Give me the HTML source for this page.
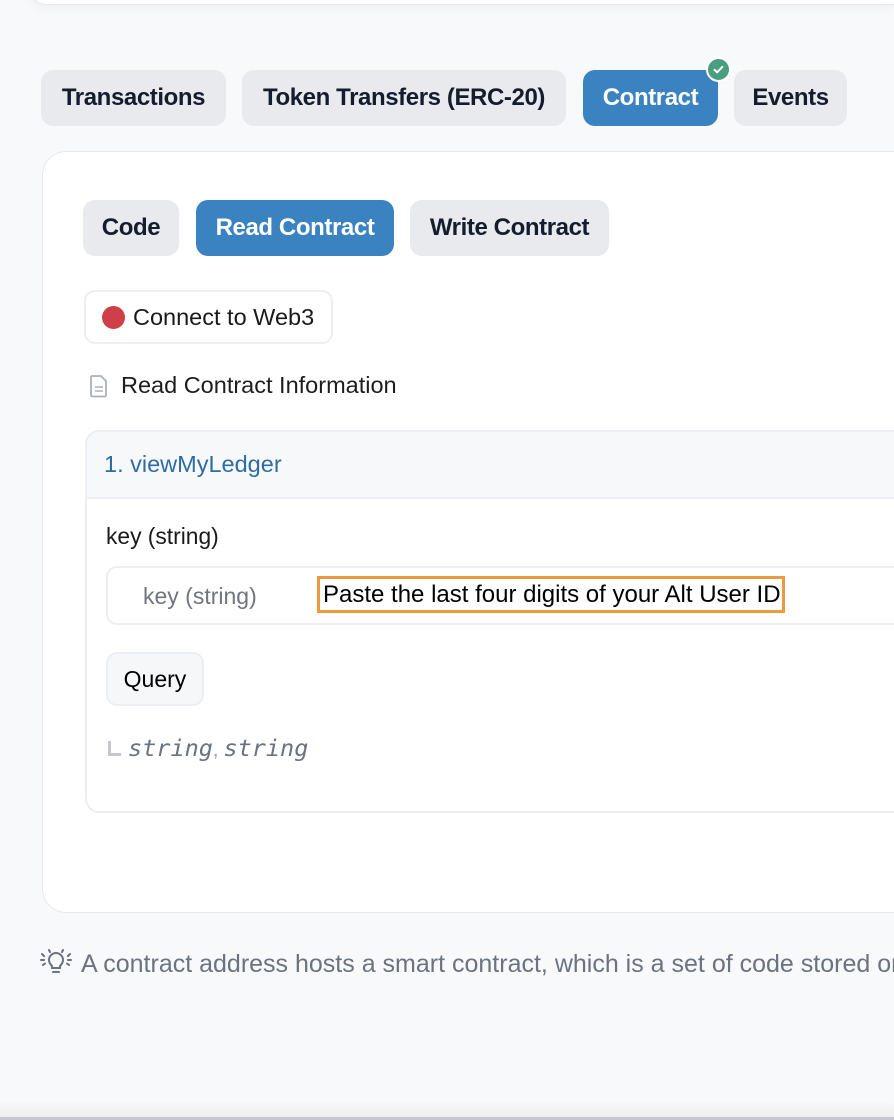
<!DOCTYPE html>
<html><head><meta charset="utf-8"><style>
*{box-sizing:border-box;margin:0;padding:0}
html,body{width:894px;height:1120px;overflow:hidden}
body{background:#f8f9fb;font-family:"Liberation Sans",sans-serif;position:relative}
.abs{position:absolute}
.topcard{left:30px;top:-30px;width:864px;height:35px;background:#fff;border:1px solid #e6e8ec;border-right:none;border-radius:16px 0 0 16px;box-shadow:0 4px 10px rgba(0,0,0,.04)}
.tab{position:absolute;top:70px;height:56px;border-radius:12px;background:#e9eaee;color:#141c2e;font-weight:bold;font-size:24px;display:flex;align-items:center;justify-content:center;letter-spacing:-0.4px}
.sub{position:absolute;top:200px;height:56px;border-radius:12px;background:#e9eaee;color:#141c2e;font-weight:bold;font-size:24px;display:flex;align-items:center;justify-content:center;letter-spacing:-0.4px}
.tab.blue,.sub.blue{background:#3b82c0;color:#fff}
.card{left:42px;top:151px;width:852px;height:762px;background:#fff;border:1px solid #e6e8ec;border-right:none;border-radius:24px 0 0 24px}
.btn{position:absolute;border:2px solid #eceef2;border-radius:11px;background:#fff;font-size:23.5px;color:#1a1a1a;display:flex;align-items:center}
</style></head><body>
<div class="abs topcard"></div>
<div class="tab" style="left:41px;width:185px">Transactions</div>
<div class="tab" style="left:242px;width:324px">Token Transfers (ERC-20)</div>
<div class="tab blue" style="left:583px;width:135px">Contract</div>
<div class="tab" style="left:734px;width:113px">Events</div>
<div class="abs" style="left:706px;top:57px;width:25px;height:25px;border-radius:50%;background:#4a9e80;border:2px solid #fff"></div>
<svg class="abs" style="left:711px;top:62px" width="15" height="15" viewBox="0 0 15 15"><path d="M3.5 7.8l2.6 2.5 5.2-5.4" fill="none" stroke="#fff" stroke-width="2" stroke-linecap="round" stroke-linejoin="round"/></svg>
<div class="abs card"></div>
<div class="sub" style="left:83px;width:96px">Code</div>
<div class="sub blue" style="left:196px;width:198px">Read Contract</div>
<div class="sub" style="left:410px;width:199px">Write Contract</div>
<div class="btn" style="left:84px;top:290px;width:249px;height:54px;padding-left:16px"><span style="width:23px;height:23px;border-radius:50%;background:#cf3f47;display:inline-block;margin-right:8px"></span>Connect to Web3</div>
<svg class="abs" style="left:89px;top:374px" width="20" height="24" viewBox="0 0 20 24"><path d="M3 2h9l5 5v14a1.5 1.5 0 0 1-1.5 1.5h-12A1.5 1.5 0 0 1 2 21V3.5A1.5 1.5 0 0 1 3 2z" fill="none" stroke="#aab0b8" stroke-width="1.8"/><path d="M6 13h8M6 17h8" stroke="#aab0b8" stroke-width="1.6"/></svg>
<div class="abs" style="left:121px;top:372px;font-size:23.5px;color:#1d1d1f;white-space:nowrap">Read Contract Information</div>
<div class="abs" style="left:85px;top:430px;width:809px;height:383px;border:2px solid #eceef1;border-right:none;border-radius:14px 0 0 14px;background:#fff;overflow:hidden">
<div style="height:67px;background:#f7f8fa;border-bottom:2px solid #eceef1;padding:19px 0 0 17px;font-size:23.5px;color:#2e6da4;white-space:nowrap">1. viewMyLedger</div>
</div>
<div class="abs" style="left:106px;top:523px;font-size:22.8px;color:#1a1a1a;white-space:nowrap">key (string)</div>
<div class="abs" style="left:106px;top:566px;width:788px;height:59px;border:2px solid #eceef1;border-right:none;border-radius:11px 0 0 11px;background:#fff"></div>
<div class="abs" style="left:143px;top:583px;font-size:23px;color:#6e7680;white-space:nowrap">key (string)</div>
<div class="abs" style="left:317px;top:576px;width:468px;height:37px;border:3px solid #ec9b3c;background:#fff;font-size:24px;color:#000;padding:2px 0 0 3px;white-space:nowrap;overflow:hidden">Paste the last four digits of your Alt User ID</div>
<div class="abs" style="left:106px;top:652px;width:98px;height:54px;border:2px solid #eceef1;border-radius:11px;background:#f6f7f9;font-size:23px;color:#000;display:flex;align-items:center;justify-content:center">Query</div>
<div class="abs" style="left:108px;top:741px;width:13px;height:15px;border-left:3px solid #c2c7d0;border-bottom:3px solid #c2c7d0"></div>
<div class="abs" style="left:128px;top:734px;font-family:'DejaVu Sans Mono','Liberation Mono',monospace;font-style:italic;font-size:23.5px;color:#6b7280;white-space:nowrap">string<span style="font-family:'Liberation Sans';font-style:normal;font-size:20px;color:#9aa0a8;margin-right:5px">,</span>string</div>
<svg class="abs" style="left:40px;top:949px" width="32" height="28" viewBox="0 0 32 28"><g fill="none" stroke="#6b7280" stroke-width="2" stroke-linecap="round"><path d="M12 17c-2-2-3-3.5-3-6a7 7 0 0 1 14 0c0 2.5-1 4-3 6v2h-8z"/><path d="M13 23h6"/><path d="M2 5l2 2M1 11h3M3 16l2-1.5M30 5l-2 2M31 11h-3M29 16l-2-1.5M9 1l1 2M23 1l-1 2"/></g></svg>
<div class="abs" style="left:81px;top:950px;width:813px;overflow:hidden;font-size:25px;color:#6b7280;white-space:nowrap">A contract address hosts a smart contract, which is a set of code stored on the blockchain</div>
<div class="abs" style="left:0;top:1100px;width:894px;height:20px;background:linear-gradient(#fafafa,#ececee)"></div>
<div class="abs" style="left:0;top:1117px;width:894px;height:3px;background:#c8c8cc"></div>
</body></html>
